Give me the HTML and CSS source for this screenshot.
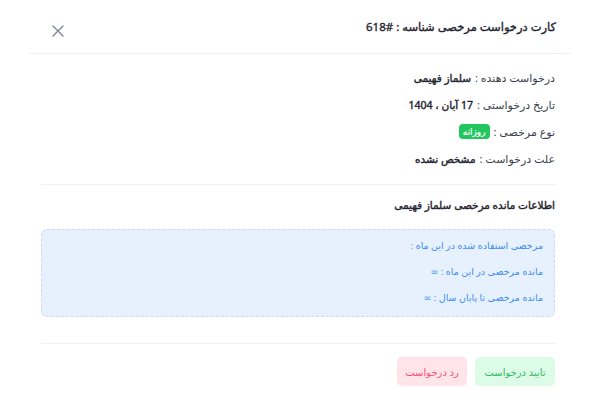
FILE: index.html
```html
<!DOCTYPE html>
<html lang="fa" dir="rtl">
<head>
<meta charset="utf-8">
<link rel="stylesheet" href="styles.css">
</head>
<body>
<div class="modal">
  <div class="header">
    <div class="title">کارت درخواست مرخصی شناسه : #618</div>
    <button class="close" aria-label="بستن">
      <svg width="12" height="12" viewBox="0 0 12 12"><path d="M1 1L11 11M11 1L1 11" stroke="#7a8094" stroke-width="1.3" stroke-linecap="round"/></svg>
    </button>
  </div>
  <div class="body">
    <div class="rows">
      <div class="row">درخواست دهنده : <b>سلماز فهیمی</b></div>
      <div class="row">تاریخ درخواستی : <b>17 آبان ، 1404</b></div>
      <div class="row">نوع مرخصی : <span class="badge">روزانه</span></div>
      <div class="row">علت درخواست : <b>مشخص نشده</b></div>
    </div>
    <div class="section">
      <div class="section-title">اطلاعات مانده مرخصی سلماز فهیمی</div>
      <div class="info">
        <div class="info-line">مرخصی استفاده شده در این ماه :</div>
        <div class="info-line">مانده مرخصی در این ماه : ∞</div>
        <div class="info-line">مانده مرخصی تا پایان سال : ∞</div>
      </div>
    </div>
    <div class="actions">
      <button class="btn approve">تایید درخواست</button>
      <button class="btn reject">رد درخواست</button>
    </div>
  </div>
</div>
</body>
</html>
```
FILE: styles.css
```css
* { box-sizing: border-box; }
html, body { margin: 0; padding: 0; background: #fff; }
body {
  width: 600px;
  height: 400px;
  font-family: "Noto Sans", "DejaVu Sans", sans-serif;
  color: #2b2f3a;
}
.modal { padding: 0 28px; }
.header {
  height: 54px;
  display: flex;
  align-items: center;
  justify-content: space-between;
  padding: 0 16px 0 24px;
  border-bottom: 1px solid #eef0f3;
}
.title {
  font-size: 11.5px;
  color: #1f2430;
  -webkit-text-stroke: 0.35px #1f2430;
}
.close {
  border: 0; background: none; padding: 0; margin: 0;
  width: 12px; height: 12px; display: flex; margin-top: 8px;
}
.body { padding: 0 17px 0 13px; }
.rows { padding: 10px 0 12px; border-bottom: 1px solid #f0f1f4; }
.row {
  height: 27px;
  display: flex;
  align-items: center;
  font-size: 11px;
  color: #3a3f4c;
  white-space: nowrap;
}
.row b {
  font-weight: 400;
  font-size: 10.5px;
  color: #1f2430;
  margin-right: 4px;
  -webkit-text-stroke: 0.4px #1f2430;
}
.badge {
  background: #22c55e;
  color: #fff;
  font-size: 9px;
  height: 15px;
  padding: 0 4px;
  margin-right: 4px;
  border-radius: 4px;
  display: inline-flex;
  align-items: center;
  -webkit-text-stroke: 0.2px #fff;
}
.section { padding: 10px 0 26px; border-bottom: 1px solid #f0f1f4; }
.section-title {
  font-size: 10.5px;
  color: #1f2430;
  -webkit-text-stroke: 0.4px #1f2430;
  height: 20px; line-height: 20px; margin-bottom: 14px;
}
.info {
  background: #e7f1fd;
  border: 1px dashed #c9dcf5;
  border-radius: 6px;
  padding: 3px 11px 6px;
  height: 88px;
}
.info-line { height: 26px; line-height: 26px; font-size: 9.5px; color: #3b8cf0; }
.actions { display: flex; gap: 8px; padding-top: 13px; }
.btn {
  border: 0; height: 29px; border-radius: 5px;
  font-family: inherit; font-size: 10px;
  white-space: nowrap;
  display: flex; align-items: center; justify-content: center;
}
.approve { width: 80px; background: #dcfce7; color: #2fb863; }
.reject { width: 70px; background: #ffe4ea; color: #f0527a; }
```
